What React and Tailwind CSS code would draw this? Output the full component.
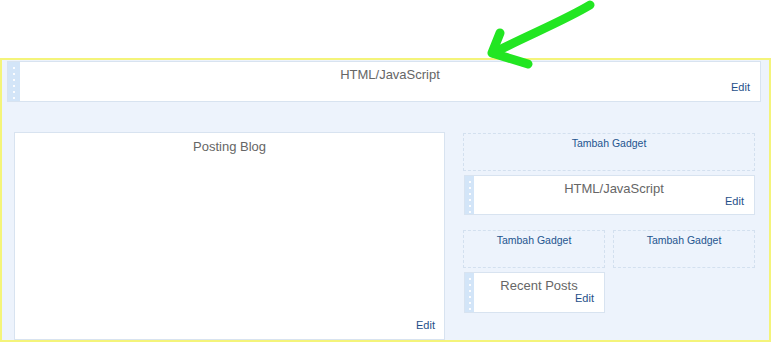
import React from "react";

function Handle({ w }) {
  return (
    <div className={`${w} shrink-0 bg-[#d3e5f8] flex flex-col items-center pt-[5px] gap-[4px]`}>
      {[0, 1, 2, 3, 4, 5].map((i) => (
        <div key={i} className="w-[2px] h-[2px] bg-white/90" />
      ))}
    </div>
  );
}

function Widget({ title, className, handle = "w-[12px]" }) {
  return (
    <div className={`flex border border-[#d8e3f0] bg-white ${className}`}>
      <Handle w={handle} />
      <div className="flex-1 flex flex-col pt-[5px]">
        <div className="text-center text-[13px] leading-[16px] text-[#666]">{title}</div>
        <div className="text-right pr-[10px] text-[11px] leading-[13px] text-[#1f4f8a] -mt-[2px]">Edit</div>
      </div>
    </div>
  );
}

function AddGadget({ className }) {
  return (
    <div className={`border border-dashed border-[#d3e0ef] text-center pt-[3px] text-[10.5px] leading-[13px] text-[#24558f] ${className}`}>
      Tambah Gadget
    </div>
  );
}

export default function App() {
  return (
    <div className="relative w-[772px] h-[343px] bg-white font-['Liberation_Sans',Arial,sans-serif]">
      <div className="h-[58px]" />
      <div className="w-[771px] h-[284px] border-2 border-[#f4f47a] bg-[#edf3fc] pl-[5px] pr-[8px] pt-[1px]">
        <Widget title="HTML/JavaScript" className="h-[41px]" />

        <div className="flex mt-[30px] pl-[7px] gap-[18px]">
          <div className="w-[431px] h-[208px] border border-[#d8e3f0] bg-white flex flex-col justify-between pt-[6px] pb-[7px]">
            <div className="text-center text-[13px] leading-[16px] text-[#666]">Posting Blog</div>
            <div className="text-right pr-[9px] text-[11px] leading-[13px] text-[#1f4f8a]">Edit</div>
          </div>

          <div className="w-[292px] flex flex-col pt-[1px]">
            <AddGadget className="h-[38px]" />
            <Widget title="HTML/JavaScript" className="h-[40px] mt-[4px] ml-[1px]" handle="w-[9px]" />
            <div className="flex gap-[8px] mt-[15px]">
              <AddGadget className="w-[142px] h-[38px]" />
              <AddGadget className="w-[142px] h-[38px]" />
            </div>
            <Widget title="Recent Posts" className="w-[141px] h-[41px] mt-[4px] ml-[1px]" handle="w-[9px]" />
          </div>
        </div>
      </div>

      <svg className="absolute left-0 top-0 pointer-events-none" width="772" height="80" viewBox="0 0 772 80">
        <g stroke="#22e622" strokeWidth="9" strokeLinecap="round" strokeLinejoin="round" fill="none">
          <path d="M590 5 C565 20 535 32 493 53" />
          <path d="M500 33 L492 53 L528 64" />
        </g>
      </svg>
    </div>
  );
}
